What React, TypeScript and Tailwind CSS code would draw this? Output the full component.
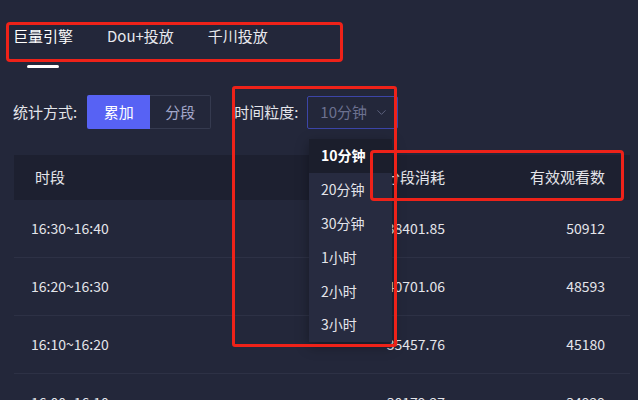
import { ChevronDown } from "lucide-react";

const rows = [
  { time: "16:30~16:40", cost: "38401.85", views: "50912" },
  { time: "16:20~16:30", cost: "40701.06", views: "48593" },
  { time: "16:10~16:20", cost: "35457.76", views: "45180" },
  { time: "16:00~16:10", cost: "30179.27", views: "34929" },
];

const options = ["10分钟", "20分钟", "30分钟", "1小时", "2小时", "3小时"];

const font = { fontFamily: '"Noto Sans CJK SC", "Liberation Sans", sans-serif' };

const App = () => {
  return (
    <div
      className="relative h-[400px] w-[638px] overflow-hidden bg-[#23273a] text-[#e4e5ea]"
      style={font}
    >
      {/* Tabs */}
      <div className="flex gap-[34px] px-[13px] pt-[26px]">
        <div className="flex flex-col items-center">
          <span className="text-[15px] leading-[20px] text-white">巨量引擎</span>
          <span className="mt-[19px] h-[3px] w-[32px] rounded-full bg-white" />
        </div>
        <span className="text-[15px] leading-[20px] text-[#e8e9ee]">Dou+投放</span>
        <span className="text-[15px] leading-[20px] text-[#e8e9ee]">千川投放</span>
      </div>

      {/* Filters */}
      <div className="mt-[27px] flex items-center px-[13px]">
        <span className="text-[15px] text-[#e4e5ea]">统计方式:</span>
        <div className="ml-[10px] flex h-[34px]">
          <button className="w-[63px] rounded-l-[2px] bg-[#5762f4] text-[15px] text-white">累加</button>
          <button className="w-[61px] rounded-r-[2px] border border-l-0 border-[#353a4f] text-[15px] text-[#a3a8cc]">
            分段
          </button>
        </div>
        <span className="ml-[23px] text-[15px] text-[#e4e5ea]">时间粒度:</span>
        <div className="ml-[9px] flex h-[33px] w-[91px] items-center justify-between rounded-[2px] border border-[#3c45a8] pl-[12px] pr-[8px]">
          <span className="text-[15px] text-[#6c7190]">10分钟</span>
          <ChevronDown className="h-[15px] w-[15px] text-[#6c7190]" strokeWidth={1.25} />
        </div>
      </div>

      {/* Table */}
      <div className="ml-[14px] mr-[8px] mt-[26px]">
        <div className="flex h-[45px] items-center bg-[#1d2030] pl-[21px] pr-[25px] text-[15px]">
          <span className="flex-1">时段</span>
          <span className="w-[160px] text-right">分段消耗</span>
          <span className="w-[160px] text-right">有效观看数</span>
        </div>
        {rows.map((r) => (
          <div
            key={r.time}
            className="flex h-[58px] items-center border-b border-[#2d3145] pl-[17px] pr-[25px] text-[14px]"
          >
            <span className="flex-1">{r.time}</span>
            <span className="w-[160px] text-right">{r.cost}</span>
            <span className="w-[160px] text-right">{r.views}</span>
          </div>
        ))}
      </div>

      {/* Dropdown menu */}
      <div className="absolute left-[309px] top-[139px] w-[83px] bg-[#272b40] shadow-[0_4px_12px_rgba(0,0,0,0.35)]">
        {options.map((o, i) => (
          <div
            key={o}
            className={
              i === 0
                ? "flex h-[33.8px] items-center bg-[#1b1e2c] pl-[12px] text-[14px] font-bold text-white"
                : "flex h-[33.8px] items-center pl-[12px] text-[14px] text-[#e4e5ea]"
            }
          >
            {o}
          </div>
        ))}
      </div>

      {/* Annotation boxes */}
      <div className="absolute left-[6px] top-[22px] h-[40px] w-[337px] rounded-[4px] border-[3px] border-[#ee2219]" />
      <div className="absolute left-[232px] top-[86px] h-[261px] w-[165px] rounded-[3px] border-[3px] border-[#ee2219]" />
      <div className="absolute left-[370px] top-[150px] h-[51px] w-[254px] rounded-[4px] border-[3px] border-[#ee2219]" />
    </div>
  );
};

export default App;
